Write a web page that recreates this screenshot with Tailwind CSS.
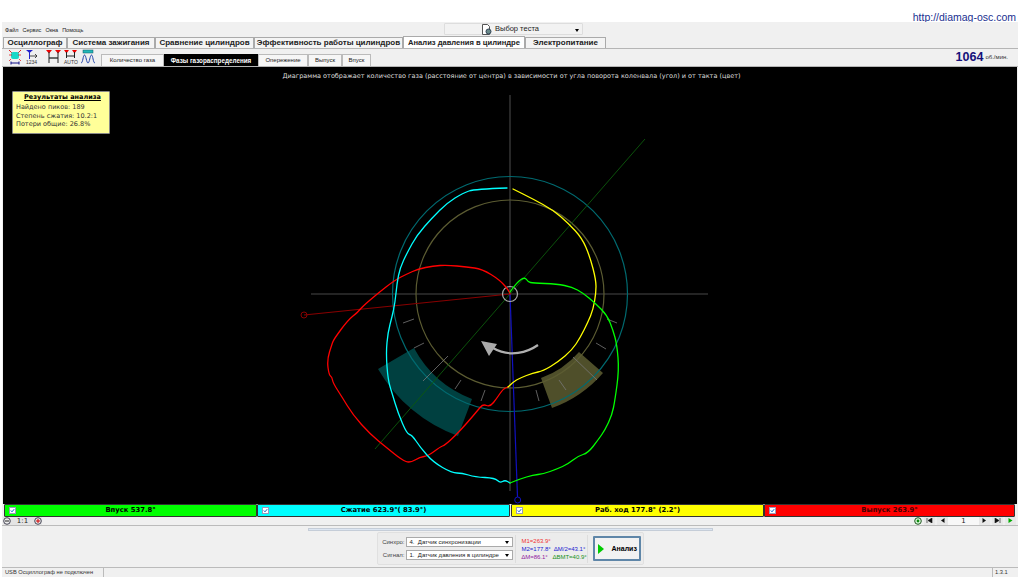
<!DOCTYPE html>
<html><head><meta charset="utf-8"><script src="https://cdn.jsdelivr.net/npm/@tailwindcss/browser@4"></script></head>
<body class="bg-white overflow-hidden">
<div class="w-[1024px] h-[580px] flex flex-col font-['DejaVu_Sans',sans-serif] text-[#222]">
  <div class="h-[22px] flex justify-end items-start pt-[12px] pr-[8px] text-[10.5px] leading-[11px] text-[#1a2f8f] font-['Liberation_Sans',sans-serif]">http://diamag-osc.com</div>
  <div class="w-[1016px] ml-[2px] h-[555px] bg-[#f0f0f0] flex flex-col">
    <div class="h-[14px] flex relative items-center pt-[2px] pl-[3px] gap-[4px] text-[5.5px] font-['Liberation_Sans',sans-serif]">
      <span>Файл</span><span>Сервис</span><span>Окна</span><span>Помощь</span>
      <div class="absolute left-[442px] top-[1px] w-[139px] h-[12px] border border-[#ddd] rounded-[1px] bg-[#f2f2f2] flex items-center pl-[36px] gap-[3px] text-[7.5px]">
        <svg width="11" height="11" viewBox="0 0 11 11"><path d="M1.5.5h5l2 2v8h-7z" fill="#fff" stroke="#555"/><circle cx="7.5" cy="7.5" r="2.5" fill="#6a8a8a" stroke="#345"/></svg>
        <span>Выбор теста</span>
        <span class="absolute right-[3px] top-[5px] w-0 h-0 border-x-[2px] border-t-[3px] border-x-transparent border-t-black"></span>
      </div>
    </div>
    <div class="h-[12px] flex items-end pl-[1px] text-[8px] font-bold font-['Liberation_Sans',sans-serif] whitespace-nowrap">
      <div class="w-[64px] h-[11px] bg-[#f4f4f4] border border-b-0 border-[#aaa] flex items-center justify-center">Осциллограф</div>
      <div class="w-[88px] h-[11px] bg-[#f4f4f4] border border-b-0 border-[#aaa] flex items-center justify-center">Система зажигания</div>
      <div class="w-[99px] h-[11px] bg-[#f4f4f4] border border-b-0 border-[#aaa] flex items-center justify-center">Сравнение цилиндров</div>
      <div class="w-[149px] h-[11px] bg-[#f4f4f4] border border-b-0 border-[#aaa] flex items-center justify-center">Эффективность работы цилиндров</div>
      <div class="w-[122px] h-[12px] bg-white border border-b-0 border-[#aaa] flex items-center justify-center text-[7.6px]">Анализ давления в цилиндре</div>
      <div class="w-[81px] h-[11px] bg-[#f4f4f4] border border-b-0 border-[#aaa] flex items-center justify-center">Электропитание</div>
    </div>
    <div class="h-[19px] border-y border-[#b5b5b5] flex items-end relative">
      <div class="w-[99px] h-full flex items-center pl-[6px] shrink-0">
        <svg width="90" height="16" viewBox="0 0 90 16" fill="none">
          <path d="M1 1l3 3M13 1l-3 3" stroke="#d22"/><rect x="3" y="3" width="8" height="7" rx="2" fill="#18d8c8"/><path d="M1 6h3M10 6h3M3 10L1 12M11 10l2 2" stroke="#d22" stroke-width=".8"/><path d="M3 14h8M3 12.5v3M11 12.5v3" stroke="#118"/>
          <path d="M18 1h7l-3.500 3z" fill="#22c"/><path d="M21.500 3v7" stroke="#22c"/><path d="M22 7h7M27 5l2 2-2 2" stroke="#222" stroke-width=".8"/><text x="18" y="15" font-size="5" fill="#333" font-family="Liberation Sans">1234</text>
          <path d="M38 1h6l-3 3.500zM47 1h6l-3 3.500z" fill="#e00"/><path d="M41 3v11M50 3v11" stroke="#222"/><path d="M41 9h9" stroke="#222" stroke-width="1.300"/>
          <path d="M56 1h5l-2.500 3.500zM64 1h5l-2.500 3.500z" fill="#e00"/><path d="M58.500 3v6M66.500 3v6M58.500 7h8" stroke="#222"/><text x="56" y="15" font-size="5" fill="#333" font-family="Liberation Sans">AUTO</text>
          <rect x="75" y="1" width="10" height="3" fill="#22b8b8" stroke="#156"  stroke-width=".5"/><path d="M73 14c2 0 2-8 3.500-8s2 8 3.500 8 2-8 3.500-8 1.500 8 3.500 8" stroke="#24a"/>
        </svg>
      </div>
      <div class="flex items-end h-full text-[6px] font-['Liberation_Sans',sans-serif] whitespace-nowrap">
        <div class="w-[63px] h-[12px] bg-[#f6f6f6] border border-b-0 border-[#bbb] flex items-center justify-center">Количество газа</div>
        <div class="w-[94px] h-[12px] bg-black text-white font-bold text-[6.3px] border border-b-0 border-black flex items-center justify-center">Фазы газораспределения</div>
        <div class="w-[50px] h-[12px] bg-[#f6f6f6] border border-b-0 border-[#bbb] flex items-center justify-center">Опережение</div>
        <div class="w-[34px] h-[12px] bg-[#f6f6f6] border border-b-0 border-[#bbb] flex items-center justify-center">Выпуск</div>
        <div class="w-[29px] h-[12px] bg-[#f6f6f6] border border-b-0 border-[#bbb] flex items-center justify-center">Впуск</div>
      </div>
      <div class="absolute right-[10px] top-0 h-full flex items-center gap-[2px] text-[#15107a] font-['Liberation_Sans',sans-serif]"><span class="text-[12.5px] font-bold">1064</span><span class="text-[6px] text-[#333]">об./мин.</span></div>
    </div>
    <div class="h-[437px] mx-[1px] bg-black relative overflow-hidden">
      <svg class="absolute inset-0" width="1012" height="437" viewBox="3 67 1012 437" fill="none">
        <path d="M378 369A152 152 0 0 0 458 436L472 399A111 111 0 0 1 414 348Z" fill="#004040"/>
        <path d="M541 378A90 90 0 0 0 579 352L603 373A122 122 0 0 1 552 408Z" fill="#4f4f2a"/>
        <path d="M311 294H708M510 95V491" stroke="#484848" stroke-width="1.100"/>
        <circle cx="510" cy="294" r="117.500" stroke="#006a70" stroke-width="1.200"/>
        <circle cx="510" cy="294" r="94" stroke="#5c5c32" stroke-width="1.200"/>
        <path d="M645 139L375 449" stroke="#0c5a0c" stroke-width=".9"/>
        <path d="M510 294L304 315" stroke="#880000" stroke-width="1.100"/>
        <circle cx="304" cy="315" r="3" stroke="#880000"/>
        <path d="M510 294L517.500 497" stroke="#1010c0" stroke-width="1.200"/>
        <circle cx="517.700" cy="500" r="3" stroke="#1010c0"/>
        <path stroke="#777" stroke-width=".8" d="M403 323L414 319M414 348L424 343M423 381L448 356M455 389L461 380M481 401L485 390M536 390L539 401M559 380L566 390M573 357L597 380M596 343L606 349M607 319L617 323"/>
        <circle cx="510" cy="294" r="7.500" stroke="#aaa" stroke-width="1.200"/>
        <path d="M538 345C528 352 510 358 493 348" stroke="#b0b0b0" stroke-width="2.200"/>
        <path d="M481 341L497 344L489 356Z" fill="#aaa"/>
        <g stroke-width="1.300" stroke-linejoin="round" stroke-linecap="round">
        <path data-p="510,294 510,292 500,280 482,269 467,267 447,265 433,266 418,269 407,274 395,280 377,294 362,307 358,312 348,320 334,339 332,344 327,360 329,375 332,377 333,383 342,397 353,415 370,434 387,448 402,460 410,463 420,457 428,456 440,447 445,445 455,436 467,423 478,410 483,404 490,407 497,398 503,389 508,387" stroke="#ff0000"/>
        <path data-p="507,188 475,189 463,193 447,203 432,218 417,235 407,253 400,268 397,283 395,303 392,317 388,332 386,353 388,380 392,393 398,413 407,434 412,435 420,447 433,462 452,473 462,473 475,477 495,478 500,483 505,480 510,483" stroke="#00ffff"/>
        <path data-p="508,387 513,382 520,378 533,373 543,371 558,362 572,350 580,338 588,322 593,310 596,293 596,280 590,257 582,238 568,223 553,210 533,199 513,189" stroke="#ffff00"/>
        <path data-p="510,292 517,282 525,277 528,282 533,283 557,284 572,287 583,293 595,303 607,315 613,330 617,345 619,370 615,400 612,415 605,430 598,440 588,453 578,456 568,464 557,469 543,474 533,475 520,479 510,483" stroke="#00ff00"/>
        </g>
      </svg>
      <div class="absolute top-[5px] inset-x-0 text-center text-[6.5px] leading-[9px] text-[#ddd] pl-[3px]">Диаграмма отображает количество газа (расстояние от центра) в зависимости от угла поворота коленвала (угол) и от такта (цвет)</div>
      <div class="absolute left-[9px] top-[24px] w-[98px] h-[43px] bg-[#ffff99] border border-[#888] rounded-[1px] pl-[3px] pt-[1px] text-[6.5px] leading-[8.5px] text-[#333] whitespace-nowrap">
        <div class="text-center font-bold underline text-black mb-[2px]">Результаты анализа</div>
        <div>Найдено пиков: 189</div><div>Степень сжатия: 10.2:1</div><div>Потери общие: 26.8%</div>
      </div>
    </div>
    <div class="h-[13px] flex ml-[2px] text-[6.8px] font-bold text-black whitespace-nowrap">
      <div class="w-[253px] bg-[#00ff00] border border-[#333] rounded-[1px] relative flex items-center justify-center"><svg class="absolute left-[4px] top-[2px]" width="7" height="7" viewBox="0 0 7 7"><rect x=".5" y=".5" width="6" height="6" fill="#fff" stroke="#99b"/><path d="M1.800 3.500l1.200 1.300 2.200-2.600" stroke="#06c" fill="none"/></svg>Впуск 537.8°</div>
      <div class="w-[253px] bg-[#00ffff] border border-[#333] rounded-[1px] relative flex items-center justify-center"><svg class="absolute left-[4px] top-[2px]" width="7" height="7" viewBox="0 0 7 7"><rect x=".5" y=".5" width="6" height="6" fill="#fff" stroke="#99b"/><path d="M1.800 3.500l1.200 1.300 2.200-2.600" stroke="#06c" fill="none"/></svg>Сжатие 623.9°( 83.9°)</div>
      <div class="w-[253px] ml-[1px] bg-[#ffff00] border border-[#333] rounded-[1px] relative flex items-center justify-center"><svg class="absolute left-[4px] top-[2px]" width="7" height="7" viewBox="0 0 7 7"><rect x=".5" y=".5" width="6" height="6" fill="#fff" stroke="#99b"/><path d="M1.800 3.500l1.200 1.300 2.200-2.600" stroke="#06c" fill="none"/></svg>Раб. ход 177.8° (2.2°)</div>
      <div class="w-[251px] bg-[#ff0000] border border-[#333] rounded-[1px] relative flex items-center justify-center text-[#400]"><svg class="absolute left-[4px] top-[2px]" width="7" height="7" viewBox="0 0 7 7"><rect x=".5" y=".5" width="6" height="6" fill="#fff" stroke="#99b"/><path d="M1.800 3.500l1.200 1.300 2.200-2.600" stroke="#06c" fill="none"/></svg>Выпуск 263.9°</div>
    </div>
    <div class="h-[9px] flex justify-between items-center px-[1px] border-b border-[#bbb] box-content">
      <div class="flex items-center gap-[2px] text-[7px] leading-[8px] bg-[#e4e4e4]">
        <svg width="8" height="8" viewBox="0 0 8 8"><circle cx="4" cy="4" r="3.300" fill="#eee" stroke="#445"/><path d="M2 4h4" stroke="#222"/></svg>
        <span class="w-[19px] text-center">1:1</span>
        <svg width="8" height="8" viewBox="0 0 8 8"><circle cx="4" cy="4" r="3.300" fill="#eee" stroke="#445"/><path d="M2 4h4M4 2v4" stroke="#c00"/></svg>
      </div>
      <div class="flex items-center text-[7px] pr-[1px]">
        <svg class="mr-[2px]" width="8" height="8" viewBox="0 0 8 8"><circle cx="4" cy="4" r="3.300" fill="#dfd" stroke="#252"/><circle cx="4" cy="4" r="1.400" fill="#181"/></svg>
        <span class="w-[11px] h-[8px] bg-[#e8e8e8] flex items-center justify-center"><svg width="7" height="5" viewBox="0 0 7 5"><path d="M1 0v5M6 0L2 2.500 6 5z" fill="#111" stroke="#111" stroke-width=".6"/></svg></span>
        <span class="w-[11px] h-[8px] ml-[2px] bg-[#e8e8e8] flex items-center justify-center"><svg width="5" height="5" viewBox="0 0 5 5"><path d="M4.500 0L1 2.500 4.500 5z" fill="#111"/></svg></span>
        <span class="w-[31px] h-[8px] bg-[#f8f8f8] text-center leading-[8px]">1</span>
        <span class="w-[11px] h-[8px] bg-[#e8e8e8] flex items-center justify-center"><svg width="5" height="5" viewBox="0 0 5 5"><path d="M.5 0L4 2.500.5 5z" fill="#111"/></svg></span>
        <span class="w-[11px] h-[8px] ml-[2px] bg-[#e8e8e8] flex items-center justify-center"><svg width="7" height="5" viewBox="0 0 7 5"><path d="M6 0v5M1 0L5 2.500 1 5z" fill="#111" stroke="#111" stroke-width=".6"/></svg></span>
        <span class="w-[11px] h-[8px] ml-[2px] bg-[#e8e8e8] flex items-center justify-center"><svg width="5" height="5" viewBox="0 0 5 5"><path d="M.5 0L4.500 2.500.5 5z" fill="#0a0"/></svg></span>
      </div>
    </div>
    <div class="h-[41px] border-b border-[#bbb] box-content font-['Liberation_Sans',sans-serif] flex flex-col items-center">
      <div class="w-[405px] h-[3px] mt-[2px] bg-[#dde6f2] border border-[#c5cdd8] shrink-0"></div>
      <div class="w-[267px] h-[33px] mt-[1px] bg-[#ececec] border border-[#e0e0e0] rounded-[2px] flex items-center text-[6px] text-[#444] shrink-0 whitespace-nowrap">
        <div class="w-[135px] flex flex-col gap-[3px] pl-[3px]">
          <div class="flex items-center"><span class="w-[25px] text-right pr-[1px]">Синхро:</span><div class="w-[107px] h-[10px] bg-white border border-[#aaa] pl-[3px] flex items-center justify-between pr-[3px] text-[#222]"><span>4.&nbsp; Датчик синхронизации</span><span class="w-0 h-0 border-x-[2px] border-t-[3px] border-x-transparent border-t-black"></span></div></div>
          <div class="flex items-center"><span class="w-[25px] text-right pr-[1px]">Сигнал:</span><div class="w-[107px] h-[10px] bg-white border border-[#aaa] pl-[3px] flex items-center justify-between pr-[3px] text-[#222]"><span>1.&nbsp; Датчик давления в цилиндре</span><span class="w-0 h-0 border-x-[2px] border-t-[3px] border-x-transparent border-t-black"></span></div></div>
        </div>
        <div class="w-[73px] h-[28px] ml-[2px] border-x border-[#ddd] pl-[6px] leading-[8.3px] flex flex-col justify-center">
          <span class="text-[#f03030]">М1=263.9°</span>
          <span class="text-[#2020d0]">М2=177.8°&nbsp; ∆М/2=43.1°</span>
          <span><span class="text-[#9020a0]">∆М=86.1°</span><span class="text-[#209020] ml-[5px]">∆ВМТ=40.9°</span></span>
        </div>
        <div class="w-[48px] h-[25px] ml-[5px] border-2 border-[#5f86a8] bg-[#f2f2f2] rounded-[1px] flex items-center pl-[3px] gap-[8px] text-[7px] font-bold text-black">
          <svg width="6" height="10" viewBox="0 0 6 10" class="shrink-0"><path d="M0 0L6 5 0 10z" fill="#0c0"/></svg><span>Анализ</span>
        </div>
      </div>
    </div>
    <div class="flex-1 flex text-[5.7px] items-stretch text-[#333] font-['Liberation_Sans',sans-serif]">
      <div class="w-[102px] border-r border-[#bbb] pl-[3px] flex items-center">USB Осциллограф не подключен</div>
      <div class="flex-1"></div>
      <div class="w-[26px] border-l border-[#bbb] pl-[2px] flex items-center">1.3.1</div>
    </div>
  </div>
</div>
<script>
document.querySelectorAll('path[data-p]').forEach(function(e){
  var p=e.getAttribute('data-p').split(' ').map(function(s){return s.split(',').map(Number)});
  var d='M'+p[0][0]+' '+p[0][1];
  for(var i=1;i<p.length-1;i++){
    var mx=(p[i][0]+p[i+1][0])/2,my=(p[i][1]+p[i+1][1])/2;
    d+='Q'+p[i][0]+' '+p[i][1]+' '+mx+' '+my;
  }
  d+='L'+p[p.length-1][0]+' '+p[p.length-1][1];
  e.setAttribute('d',d);
});
</script>
</body></html>
